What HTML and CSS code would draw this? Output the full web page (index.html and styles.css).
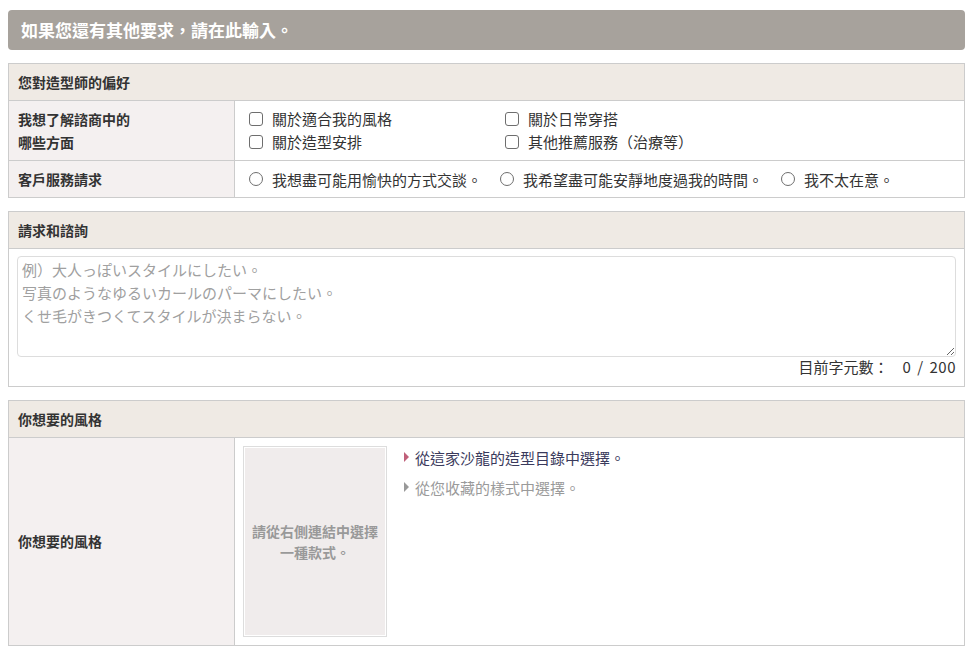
FILE: index.html
```html
<!DOCTYPE html>
<html lang="zh-Hant">
    <head>
        <meta charset="UTF-8">
        <link rel="stylesheet" href="styles.css">
    </head>
    <body>
        <h2 class="page-title">如果您還有其他要求，請在此輸入。</h2>

        <!-- stylist preferences -->
        <div class="section">
            <div class="section-head">您對造型師的偏好</div>
            <div class="row">
                <div class="row-label">我想了解諮商中的<br>哪些方面</div>
                <div class="row-body check-grid">
                    <label class="opt"><input type="checkbox" name="topic">關於適合我的風格</label>
                    <label class="opt"><input type="checkbox" name="topic">關於日常穿搭</label>
                    <label class="opt"><input type="checkbox" name="topic">關於造型安排</label>
                    <label class="opt"><input type="checkbox" name="topic">其他推薦服務（治療等）</label>
                </div>
            </div>
            <div class="row">
                <div class="row-label">客戶服務請求</div>
                <div class="row-body radio-line">
                    <label class="opt"><input type="radio" name="service">我想盡可能用愉快的方式交談。</label>
                    <label class="opt"><input type="radio" name="service">我希望盡可能安靜地度過我的時間。</label>
                    <label class="opt"><input type="radio" name="service">我不太在意。</label>
                </div>
            </div>
        </div>

        <!-- free text -->
        <div class="section">
            <div class="section-head">請求和諮詢</div>
            <div class="section-body">
                <textarea class="request" maxlength="200" placeholder="例）大人っぽいスタイルにしたい。&#10;写真のようなゆるいカールのパーマにしたい。&#10;くせ毛がきつくてスタイルが決まらない。"></textarea>
                <p class="counter">目前字元數：<span class="count">0 / 200</span></p>
            </div>
        </div>

        <!-- style picker -->
        <div class="section">
            <div class="section-head">你想要的風格</div>
            <div class="row row-tall">
                <div class="row-label">你想要的風格</div>
                <div class="row-body style-pick">
                    <div class="style-box">
                        <div class="style-inner">請從右側連結中選擇<br>一種款式。</div>
                    </div>
                    <ul class="style-links">
                        <li><a href="#" class="active">從這家沙龍的造型目錄中選擇。</a></li>
                        <li><a href="#" class="muted">從您收藏的樣式中選擇。</a></li>
                    </ul>
                </div>
            </div>
        </div>
    </body>
</html>
```

FILE: styles.css
```css
body {
    margin: 8px;
    font-family: "Noto Sans CJK JP", "Noto Sans CJK TC", "Noto Sans", sans-serif;
    font-size: 15px;
    color: #333;
    background-color: #fff;
}

.page-title {
    margin: 2px 0 0 0;
    height: 40px;
    line-height: 40px;
    padding-left: 13px;
    background-color: #a7a29c;
    border-radius: 4px;
    color: #fff;
    font-size: 17px;
    font-weight: bold;
}

.section {
    margin-top: 13px;
    border: 1px solid #ccc;
}

.section-head {
    height: 36px;
    line-height: 36px;
    padding-left: 9px;
    background-color: #efeae4;
    border-bottom: 1px solid #ccc;
    font-weight: bold;
    font-size: 14px;
}

.row {
    display: grid;
    grid-template-columns: 226px 1fr;
    border-bottom: 1px solid #ccc;
}

.row:last-child {
    border-bottom: none;
}

.row-label {
    display: flex;
    align-items: center;
    padding-left: 9px;
    background-color: #f4f0f0;
    border-right: 1px solid #ccc;
    font-weight: bold;
    font-size: 14px;
    line-height: 23px;
}

.row-body {
    padding: 6px 10px 7px 10px;
}

.check-grid {
    display: grid;
    grid-template-columns: 256px 256px;
    line-height: 23px;
}

.radio-line {
    display: flex;
    align-items: center;
    height: 36px;
    padding: 0 10px;
}

.radio-line .opt {
    margin-right: 14px;
}

.opt {
    display: flex;
    align-items: center;
    white-space: nowrap;
}

.opt input {
    -webkit-appearance: none;
    appearance: none;
    box-sizing: border-box;
    width: 14px;
    height: 14px;
    margin: 0 9px 0 4px;
    border: 1px solid #6e6e6e;
    border-radius: 3px;
    background-color: #fff;
    flex-shrink: 0;
}

.opt input[type="radio"] {
    border-radius: 50%;
}

.section-body {
    padding: 7px 8px 9px 8px;
}

.request {
    display: block;
    box-sizing: border-box;
    width: 100%;
    height: 101px;
    padding: 1px 4px;
    border: 1px solid #ddd;
    border-radius: 4px;
    font-family: inherit;
    font-size: 15px;
    line-height: 23px;
    color: #333;
}

.request::placeholder {
    color: #a0a0a0;
}

.counter {
    margin: 0;
    text-align: right;
    line-height: 20px;
}

.count {
    margin-left: 14px;
    word-spacing: 2px;
    letter-spacing: 0.5px;
}

.row-tall .row-body {
    padding: 8px;
}

.style-pick {
    display: flex;
    gap: 17px;
}

.style-box {
    width: 140px;
    height: 187px;
    border: 1px solid #ddd;
    padding: 1px;
    background-color: #fff;
}

.style-inner {
    height: 100%;
    display: flex;
    align-items: center;
    justify-content: center;
    text-align: center;
    background-color: #f0ecec;
    color: #999;
    font-size: 14px;
    font-weight: bold;
    line-height: 21px;
}

.style-links {
    list-style: none;
    margin: 0;
    padding: 0;
}

.style-links li {
    line-height: 24px;
    margin-bottom: 6px;
}

.style-links a {
    text-decoration: none;
    padding-left: 11px;
    position: relative;
}

.style-links a:before {
    content: " ";
    position: absolute;
    left: 0;
    top: 5px;
    border-top: 5px solid transparent;
    border-bottom: 5px solid transparent;
    border-left: 5px solid #c0607a;
}

.style-links a.active {
    color: #3a3a5c;
}

.style-links a.muted {
    color: #9a9a9a;
}

.style-links a.muted:before {
    border-left-color: #999;
}
```
